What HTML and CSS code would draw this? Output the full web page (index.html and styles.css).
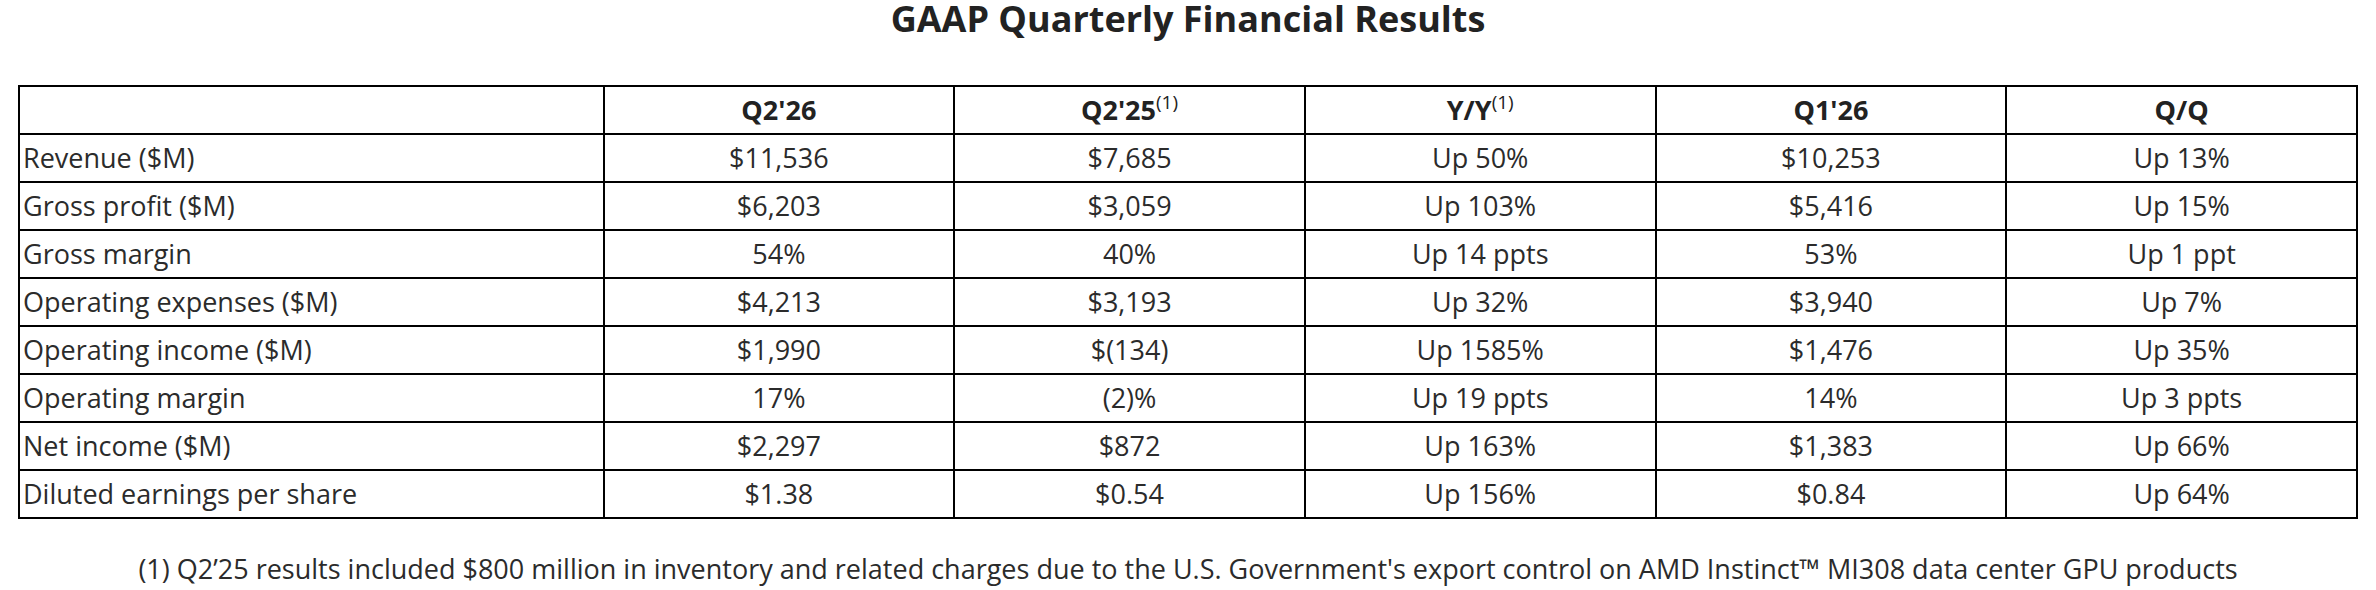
FILE: index.html
```html
<!DOCTYPE html>
<html lang="en">
<head>
<meta charset="utf-8">
<title>GAAP Quarterly Financial Results</title>
<link rel="stylesheet" href="styles.css">
</head>
<body>
<h1 class="title">GAAP Quarterly Financial Results</h1>
<table class="results">
  <colgroup>
    <col class="col-label">
    <col class="col-val"><col class="col-val"><col class="col-val"><col class="col-val"><col class="col-val">
  </colgroup>
  <thead>
    <tr>
      <th></th>
      <th>Q2'26</th>
      <th>Q2'25<sup class="note">(1)</sup></th>
      <th>Y/Y<sup class="note">(1)</sup></th>
      <th>Q1'26</th>
      <th>Q/Q</th>
    </tr>
  </thead>
  <tbody>
    <tr><td>Revenue ($M)</td><td>$11,536</td><td>$7,685</td><td>Up 50%</td><td>$10,253</td><td>Up 13%</td></tr>
    <tr><td>Gross profit ($M)</td><td>$6,203</td><td>$3,059</td><td>Up 103%</td><td>$5,416</td><td>Up 15%</td></tr>
    <tr><td>Gross margin</td><td>54%</td><td>40%</td><td>Up 14 ppts</td><td>53%</td><td>Up 1 ppt</td></tr>
    <tr><td>Operating expenses ($M)</td><td>$4,213</td><td>$3,193</td><td>Up 32%</td><td>$3,940</td><td>Up 7%</td></tr>
    <tr><td>Operating income ($M)</td><td>$1,990</td><td>$(134)</td><td>Up 1585%</td><td>$1,476</td><td>Up 35%</td></tr>
    <tr><td>Operating margin</td><td>17%</td><td>(2)%</td><td>Up 19 ppts</td><td>14%</td><td>Up 3 ppts</td></tr>
    <tr><td>Net income ($M)</td><td>$2,297</td><td>$872</td><td>Up 163%</td><td>$1,383</td><td>Up 66%</td></tr>
    <tr><td>Diluted earnings per share</td><td>$1.38</td><td>$0.54</td><td>Up 156%</td><td>$0.84</td><td>Up 64%</td></tr>
  </tbody>
</table>
<p class="footnote">(1) Q2’25 results included $800 million in inventory and related charges due to the U.S. Government's export control on AMD Instinct™ MI308 data center GPU products</p>
</body>
</html>
```

FILE: styles.css
```css
html, body {
  margin: 0;
  padding: 0;
  background: #ffffff;
}

body {
  font-family: "Open Sans", "Noto Sans", sans-serif;
  color: #2b2b2b;
}

.title {
  margin: 0;
  font-size: 36px;
  line-height: 38px;
  font-weight: 700;
  text-align: center;
  color: #222222;
}

.results {
  margin: 47px 18px 0;
  width: calc(100% - 36px);
  border-collapse: collapse;
  table-layout: fixed;
  border: 2px solid #000;
  font-size: 27px;
}

.col-label { width: 25%; }
.col-val { width: 15%; }

.results th,
.results td {
  border: 2px solid #000;
  height: 46px;
  padding: 0 3px;
  text-align: center;
  vertical-align: middle;
  line-height: 1.2;
}

.results th {
  font-weight: 700;
  color: #222222;
}

.results td:first-child {
  text-align: left;
}

.note {
  font-weight: 400;
  font-size: 19px;
  line-height: 0;
  vertical-align: 11px;
}

.footnote {
  margin: 32px 0 0;
  font-size: 27px;
  line-height: 36px;
  text-align: center;
}
```
